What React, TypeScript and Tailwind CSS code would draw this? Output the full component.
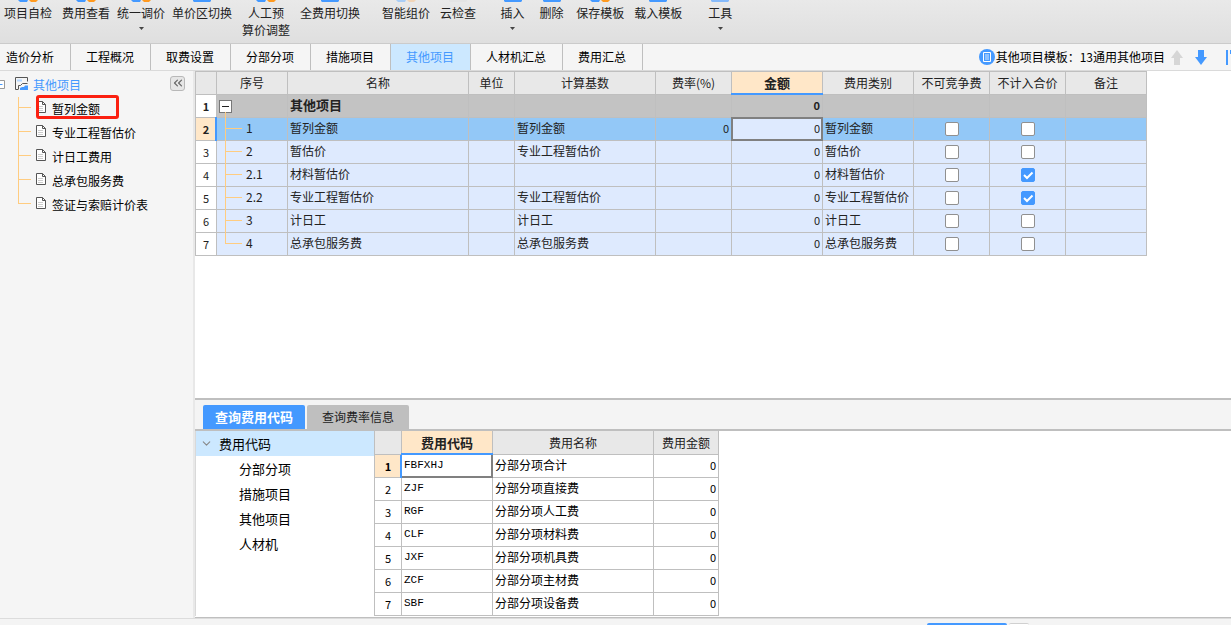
import { useState } from 'react'
import type { ReactNode } from 'react'
import { ChevronDown, ChevronsLeft } from 'lucide-react'
import { clsx } from 'clsx'

type Tool = { lines: string[]; icon: ReactNode; menu?: boolean; size?: string }

function IconEdge({ left, right }: { left: string; right?: string }) {
  return (
    <svg width="22" height="2" viewBox="0 0 22 2" aria-hidden>
      {right ? (
        <>
          <path d="M1 0h10l-1 2H3z" fill={left} />
          <path d="M12 0h9l-2 2h-5z" fill={right} />
        </>
      ) : (
        <path d="M2 0h18v1l-1 1H3L2 1z" fill={left} />
      )}
    </svg>
  )
}

const duo = <IconEdge left="#4499ff" right="#ff9a1f" />
const solo = <IconEdge left="#4499ff" />

const TOOL_GROUPS: Tool[][] = [
  [
    { lines: ['项目自检'], icon: duo },
    { lines: ['费用查看'], icon: duo },
    { lines: ['统一调价'], icon: duo, menu: true, size: 'px-[2px]' },
    { lines: ['单价区切换'], icon: solo },
    { lines: ['人工预', '算价调整'], icon: duo },
    { lines: ['全费用切换'], icon: solo },
  ],
  [
    { lines: ['智能组价'], icon: <IconEdge left="#a9cdf5" right="#f1d5b8" /> },
    { lines: ['云检查'], icon: <IconEdge left="#e4e4e4" /> },
  ],
  [
    { lines: ['插入'], icon: solo, menu: true, size: 'w-[39px]' },
    { lines: ['删除'], icon: solo, size: 'w-[39px]' },
    { lines: ['保存模板'], icon: duo },
    { lines: ['载入模板'], icon: solo },
  ],
  [{ lines: ['工具'], icon: <IconEdge left="#86bafa" />, menu: true, size: 'w-[42px]' }],
]

const TABS = ['造价分析', '工程概况', '取费设置', '分部分项', '措施项目', '其他项目', '人材机汇总', '费用汇总']

const TREE = ['暂列金额', '专业工程暂估价', '计日工费用', '总承包服务费', '签证与索赔计价表']

const COLUMNS = [
  { title: '', width: 'w-[21px]' },
  { title: '序号', width: 'w-[71px]' },
  { title: '名称', width: 'w-[181px]' },
  { title: '单位', width: 'w-[46px]' },
  { title: '计算基数', width: 'w-[141px]' },
  { title: '费率(%)', width: 'w-[76px]' },
  { title: '金额', width: 'w-[91px]' },
  { title: '费用类别', width: 'w-[91px]' },
  { title: '不可竞争费', width: 'w-[76px]' },
  { title: '不计入合价', width: 'w-[76px]' },
  { title: '备注', width: 'w-[81px]' },
]

const ITEMS = [
  { no: '1', name: '暂列金额', base: '暂列金额', rate: '0', excluded: false },
  { no: '2', name: '暂估价', base: '专业工程暂估价', rate: '', excluded: false },
  { no: '2.1', name: '材料暂估价', base: '', rate: '', excluded: true },
  { no: '2.2', name: '专业工程暂估价', base: '专业工程暂估价', rate: '', excluded: true },
  { no: '3', name: '计日工', base: '计日工', rate: '', excluded: false },
  { no: '4', name: '总承包服务费', base: '总承包服务费', rate: '', excluded: false },
]

const CODES = [
  ['FBFXHJ', '分部分项合计'],
  ['ZJF', '分部分项直接费'],
  ['RGF', '分部分项人工费'],
  ['CLF', '分部分项材料费'],
  ['JXF', '分部分项机具费'],
  ['ZCF', '分部分项主材费'],
  ['SBF', '分部分项设备费'],
]

const CODE_GROUPS = ['分部分项', '措施项目', '其他项目', '人材机']

const cell = 'relative border-r border-b border-[#bfbfbf] p-0 whitespace-nowrap'
const text = 'pb-[2px] pl-[2px]'
const amount = 'pr-[2px] pb-[2px] text-right text-[11px]'

function Toolbar() {
  return (
    <header className="h-[43px] overflow-hidden bg-linear-to-b from-[#e9e9e9] to-[#dfdfdf]">
      <div className="-ml-px flex gap-3">
        {TOOL_GROUPS.map((group, i) => (
          <div key={i} className="flex items-start">
            {group.map((tool) => (
              <button
                key={tool.lines[0]}
                className={clsx('flex shrink-0 flex-col items-center leading-[17px] text-[#222]', tool.size ?? 'px-[5px]')}
              >
                {tool.icon}
                <span className="mt-[2px] block">
                  {tool.lines.map((line) => (
                    <span key={line} className="block whitespace-nowrap">{line}</span>
                  ))}
                </span>
                {tool.menu && (
                  <svg className="mt-[6px]" width="5" height="3" viewBox="0 0 5 3" aria-hidden>
                    <path d="M0 0h5L2.5 3z" fill="#444" />
                  </svg>
                )}
              </button>
            ))}
          </div>
        ))}
      </div>
    </header>
  )
}

function Arrow({ down, color }: { down?: boolean; color: string }) {
  return (
    <svg width="12" height="15" viewBox="0 0 12 15" className={clsx(down && 'rotate-180')} aria-hidden>
      <path d="M6 0l6 8H9v7H3V8H0z" fill={color} />
    </svg>
  )
}

function TabBar() {
  const [active, setActive] = useState('其他项目')

  return (
    <nav className="flex h-7 shrink-0 overflow-hidden border-t border-b border-t-[#cbcbcb] border-b-[#dadada] bg-[#f5f5f5]">
      <div className="-ml-[9px] flex" role="tablist">
        {TABS.map((tab) => (
          <button
            key={tab}
            role="tab"
            aria-selected={tab === active}
            onClick={() => setActive(tab)}
            className={clsx(
              'border-r border-[#bfbfbf] pr-4 pl-[15px] whitespace-nowrap',
              tab === active ? 'bg-[#cce8ff] text-[#4499ff]' : 'text-black'
            )}
          >
            {tab}
          </button>
        ))}
      </div>
      <div className="ml-auto flex items-center">
        <svg width="16" height="16" viewBox="0 0 16 16" className="mr-[1px]" aria-hidden>
          <circle cx="8" cy="8" r="8" fill="#4499ff" />
          <path d="M4.500 3.500h7v9h-7z" fill="none" stroke="#fff" />
          <path d="M6 6h4M6 8h4M6 10h4" stroke="#fff" strokeWidth="0.8" />
        </svg>
        <span className="whitespace-nowrap text-black">其他项目模板：13通用其他项目</span>
        <button className="flex w-6 justify-center" aria-label="上移">
          <Arrow color="#d6d6d6" />
        </button>
        <button className="flex w-6 justify-center" aria-label="下移">
          <Arrow down color="#4499ff" />
        </button>
        <button className="flex w-[18px] justify-end" aria-label="筛选">
          <svg width="5" height="15" viewBox="0 0 5 15" aria-hidden>
            <path d="M0 0h2v15H0zM4 0h1v4H4z" fill="#4499ff" />
          </svg>
        </button>
      </div>
    </nav>
  )
}

function DocIcon() {
  return (
    <svg width="10" height="12" viewBox="0 0 10 12" className="mb-1" aria-hidden>
      <path d="M.5.5h6l3 3v8h-9z" fill="#fff" stroke="#555" />
      <path d="M6.500 .5v3h3" fill="none" stroke="#555" />
      <path d="M2 5.500h5M2 7.500h5M2 9.500h5" stroke="#ccc" />
    </svg>
  )
}

function Sidebar() {
  return (
    <aside className="w-[195px] shrink-0 overflow-hidden border-r-2 border-[#e8e8e8] bg-[#f5f5f5] pt-[2px]">
      <div className="flex h-6 items-center">
        <svg width="15" height="13" viewBox="0 0 15 13" aria-hidden>
          <path d="M-4 1.500h8.500v8H-4" fill="#fff" stroke="#999" />
          <path d="M-2 5.500h4.500" stroke="#4499ff" />
        </svg>
        <svg width="13" height="14" viewBox="0 0 13 14" className="mr-[5px] mb-[2px]" aria-hidden>
          <path d="M12.500 4.500v-4H.5v12h3" fill="none" stroke="#555" />
          <path d="M2 2.500h5v2H2z" fill="#b5d7ff" />
          <path d="M3.500 12V8.500h2l2-2h5" fill="none" stroke="#555" />
          <path d="M5 13v-2l2-1h2l1-1.500h3V13z" fill="#4499ff" />
        </svg>
        <span className="text-[#4499ff]">其他项目</span>
        <button
          className="mr-2 mb-1 ml-auto flex size-[15px] items-center justify-center rounded-[3px] border border-[#b8b8b8] bg-[#e6e6e6]"
          aria-label="收起"
        >
          <ChevronsLeft size={14} strokeWidth={2} className="shrink-0 text-[#666]" />
        </button>
      </div>
      <ul>
        {TREE.map((item, i) => (
          <li key={item} className="relative flex h-6 items-center gap-[6px] pl-9 text-black">
            <span
              className={clsx(
                'absolute top-0 left-[18px] w-[13px] border-l border-[#ffcc80]',
                i === TREE.length - 1 ? 'h-[11px]' : 'h-6'
              )}
            />
            <span className="absolute top-[10px] left-[18px] h-px w-[13px] bg-[#ffcc80]" />
            <DocIcon />
            {item}
            {i === 0 && (
              <span className="absolute -top-[2px] left-9 h-6 w-[83px] rounded-[3px] border-[3px] border-[#fb2010]" />
            )}
          </li>
        ))}
      </ul>
    </aside>
  )
}

function Check({ label, defaultChecked }: { label: string; defaultChecked?: boolean }) {
  return (
    <span className="relative mx-auto block size-[14px]">
      <input
        type="checkbox"
        aria-label={label}
        defaultChecked={defaultChecked}
        className="peer block size-[14px] appearance-none rounded-[2px] border border-[#909090] bg-white checked:border-[#4499ff] checked:bg-[#4499ff]"
      />
      <svg
        width="14"
        height="14"
        viewBox="0 0 14 14"
        className="pointer-events-none absolute inset-0 hidden peer-checked:block"
        aria-hidden
      >
        <path d="M3 7l3 3 5.500-5.500" fill="none" stroke="#fff" strokeWidth="2" />
      </svg>
    </span>
  )
}

function ItemTable() {
  return (
    <table className="w-[952px] table-fixed border-separate border-spacing-0 border-t border-l border-[#bfbfbf] text-[#222]">
      <thead>
        <tr className="h-[23px] bg-[#e8e8e8]">
          {COLUMNS.map((col, i) => (
            <th
              key={i}
              className={clsx(
                cell,
                col.width,
                col.title === '金额' ? 'bg-[#ffe7c8] text-[13px] font-bold' : 'font-normal'
              )}
            >
              {col.title}
              {col.title === '金额' && <span className="absolute -right-px -bottom-px -left-px h-[2px] bg-[#4499ff]" />}
            </th>
          ))}
        </tr>
      </thead>
      <tbody>
        <tr className="h-[23px] bg-[#c3c3c3]">
          <td className={clsx(cell, 'bg-white text-center text-[11px] font-bold')}>1</td>
          <td className={clsx(cell, 'pl-[2px]')}>
            <button className="flex size-[13px] items-center justify-center border border-[#777] bg-white" aria-label="折叠">
              <span className="h-px w-[7px] bg-[#222]" />
            </button>
            <span className="absolute -bottom-px left-2 h-[6px] w-px bg-[#ffcc80]" />
          </td>
          <td className={clsx(cell, text, 'text-[13px] font-bold')}>其他项目</td>
          <td className={cell} />
          <td className={cell} />
          <td className={cell} />
          <td className={clsx(cell, amount, 'font-bold')}>0</td>
          <td className={cell} />
          <td className={cell} />
          <td className={cell} />
          <td className={cell} />
        </tr>
        {ITEMS.map((item, i) => {
          const selected = i === 0
          const last = i === ITEMS.length - 1

          return (
            <tr key={item.no} className={clsx('h-[23px]', selected ? 'bg-[#93c8f7]' : 'bg-[#deeafe]')}>
              <td className={clsx(cell, 'text-center text-[11px]', selected ? 'bg-[#ffe7c8] font-bold' : 'bg-white')}>
                {i + 2}
                {selected && <span className="absolute -top-px -right-px -bottom-px w-[2px] bg-[#4499ff]" />}
              </td>
              <td className={clsx(cell, 'pb-[2px] pl-[29px]')}>
                <span className={clsx('absolute top-0 left-2 w-px bg-[#ffcc80]', last ? 'h-[11px]' : 'h-[23px]')} />
                <span className="absolute top-[10px] left-2 h-px w-[17px] bg-[#ffcc80]" />
                {item.no}
              </td>
              <td className={clsx(cell, text)}>{item.name}</td>
              <td className={cell} />
              <td className={clsx(cell, text)}>{item.base}</td>
              <td className={clsx(cell, amount)}>{item.rate}</td>
              <td className={clsx(cell, amount, selected && 'bg-[#deeafe]')}>
                0
                {selected && <span className="absolute -inset-px border-2 border-[#808080]" />}
              </td>
              <td className={clsx(cell, text)}>{item.name}</td>
              <td className={cell}>
                <Check label={`${item.name} 不可竞争费`} />
              </td>
              <td className={cell}>
                <Check label={`${item.name} 不计入合价`} defaultChecked={item.excluded} />
              </td>
              <td className={cell} />
            </tr>
          )
        })}
      </tbody>
    </table>
  )
}

function CodeTable() {
  return (
    <table className="w-[345px] table-fixed border-separate border-spacing-0 border-l border-[#bfbfbf]">
      <thead>
        <tr className="h-6 bg-[#e8e8e8] text-[#222]">
          <th className={clsx(cell, 'w-[27px]')} />
          <th className={clsx(cell, 'w-[91px] bg-[#ffe7c8] text-[13px] font-bold')}>
            费用代码
            <span className="absolute -right-px -bottom-px -left-px h-[2px] bg-[#4499ff]" />
          </th>
          <th className={clsx(cell, 'w-[161px] font-normal')}>费用名称</th>
          <th className={clsx(cell, 'w-[65px] font-normal')}>费用金额</th>
        </tr>
      </thead>
      <tbody className="text-black">
        {CODES.map(([code, name], i) => {
          const selected = i === 0

          return (
            <tr key={code} className="h-[23px]">
              <td className={clsx(cell, 'text-center text-[11px]', selected && 'bg-[#ffe7c8] font-bold')}>
                {i + 1}
                {selected && <span className="absolute top-0 -right-px -bottom-px w-[2px] bg-[#4499ff]" />}
              </td>
              <td className={clsx(cell, text, "font-['Liberation_Mono',monospace] text-[11px]")}>
                {code}
                {selected && (
                  <span className="absolute top-0 -right-px -bottom-px left-0 border-r-2 border-b-2 border-[#808080]" />
                )}
              </td>
              <td className={clsx(cell, text)}>{name}</td>
              <td className={clsx(cell, amount)}>0</td>
            </tr>
          )
        })}
      </tbody>
    </table>
  )
}

function CodePanel() {
  return (
    <section className="shrink-0 border-t-2 border-[#bfbfbf] bg-white">
      <div className="flex h-[31px] items-end gap-[2px] border-b-2 border-[#bfbfbf] bg-[#f4f4f4] pl-2" role="tablist">
        <button role="tab" aria-selected="true" className="h-6 w-[102px] rounded-t-[2px] bg-[#4499ff] text-[13px] font-bold text-white">
          查询费用代码
        </button>
        <button role="tab" aria-selected="false" className="h-6 w-[102px] rounded-t-[2px] bg-[#bfbfbf] text-[#222]">
          查询费率信息
        </button>
      </div>
      <div className="flex border-b border-[#bfbfbf] pb-px">
        <div className="w-[179px] border-l border-[#d9d9d9] text-[13px] text-black">
          <div className="flex h-[25px] items-center gap-[6px] bg-[#cce8ff] pl-1">
            <ChevronDown size={13} className="text-[#888]" aria-hidden />
            费用代码
          </div>
          <ul>
            {CODE_GROUPS.map((group) => (
              <li key={group} className="flex h-[25px] items-center pl-[43px]">{group}</li>
            ))}
          </ul>
        </div>
        <CodeTable />
      </div>
    </section>
  )
}

export default function App() {
  return (
    <div className="flex min-h-screen flex-col overflow-hidden bg-white font-['Noto_Sans_CJK_SC',sans-serif] text-xs">
      <Toolbar />
      <TabBar />
      <div className="flex flex-1">
        <Sidebar />
        <main className="flex min-w-0 flex-1 flex-col">
          <div className="flex-1">
            <ItemTable />
          </div>
          <CodePanel />
        </main>
      </div>
      <footer className="flex h-[7px] items-end justify-end gap-[2px] border-t border-[#dcdcdc] bg-[#f4f4f4] pr-[202px]">
        <span className="h-[2px] w-20 rounded-t-[2px] bg-[#4499ff]" />
        <span className="h-[2px] w-5 rounded-t-[2px] border-t border-[#d0d0d0] bg-white" />
      </footer>
    </div>
  )
}
